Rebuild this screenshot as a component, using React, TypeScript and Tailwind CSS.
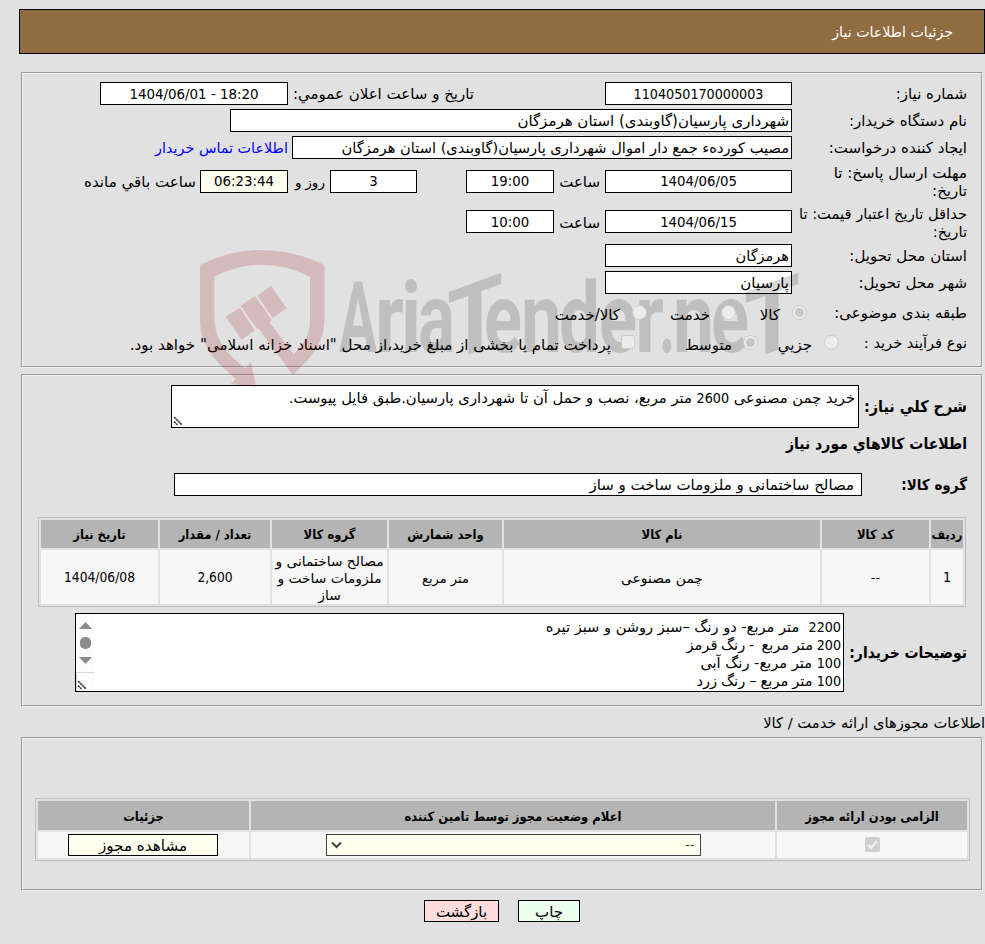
import { ReactNode } from "react";
import clsx from "clsx";

type BoxProps = {
    children?: ReactNode;
    className?: string;
};

type RowProps = {
    label: ReactNode;
    children: ReactNode;
    className?: string;
};

const goodsColumns = [
    { title: "ردیف", width: "w-[32px]" },
    { title: "کد کالا", width: "w-[107px]" },
    { title: "نام کالا", width: "w-[316px]" },
    { title: "واحد شمارش", width: "w-[113px]" },
    { title: "گروه کالا", width: "w-[115px]" },
    { title: "تعداد / مقدار", width: "w-[110px]" },
    { title: "تاریخ نیاز", width: "w-[117px]" },
];

const wordmark = [
    { char: "A", x: 339, width: 38 },
    { char: "r", x: 375, width: 29 },
    { char: "i", x: 401, width: 20 },
    { char: "a", x: 418, width: 37 },
    { char: "e", x: 484, width: 38 },
    { char: "n", x: 521, width: 41 },
    { char: "d", x: 559, width: 41 },
    { char: "e", x: 599, width: 38 },
    { char: "r", x: 635, width: 29 },
    { char: ".", x: 659, width: 16 },
    { char: "n", x: 673, width: 41 },
    { char: "e", x: 711, width: 38 },
];

const Num = ({ children }: { children: ReactNode }) => (
    <span className="font-['DejaVu_Sans_Condensed'] text-[14.2px]">
        {children}
    </span>
);

const Box = ({ children, className }: BoxProps) => (
    <div
        className={clsx(
            "flex h-[23px] shrink-0 items-center border border-black px-[2px] whitespace-nowrap",
            className,
        )}
    >
        {children}
    </div>
);

const NumBox = ({ children, className }: BoxProps) => (
    <Box
        className={clsx(
            "justify-center font-['DejaVu_Sans_Condensed']",
            className,
        )}
    >
        {children}
    </Box>
);

const Row = ({ label, children, className }: RowProps) => (
    <div className={clsx("flex items-center", className)}>
        <div className="w-[175px] shrink-0 whitespace-nowrap">{label}</div>
        {children}
    </div>
);

const Panel = ({ children, className }: BoxProps) => (
    <section
        className={clsx(
            "mr-[2px] ml-[21px] border-2 border-[#f0f0f0] [border-style:groove]",
            className,
        )}
    >
        {children}
    </section>
);

const Radio = ({ checked }: { checked?: boolean }) => (
    <span className="relative z-10 flex size-[15px] shrink-0 items-center justify-center rounded-full border border-[#cbcbcb] bg-[#ececec]">
        {checked && <span className="size-[9px] rounded-full bg-[#c8c8c8]" />}
    </span>
);

const ResizeHandle = () => (
    <svg width="10" height="10" viewBox="0 0 10 10" className="shrink-0">
        <path
            d="M1 1L9 9M1 5.5L4.5 9"
            stroke="#444"
            strokeWidth="1.7"
            strokeDasharray="2.4 0.4"
            fill="none"
        />
    </svg>
);

const Watermark = () => (
    <svg
        className="pointer-events-none absolute top-0 left-0 [direction:ltr]"
        width="985"
        height="400"
        viewBox="0 0 985 400"
    >
        <g
            transform="translate(190 245) scale(0.3333)"
            fill="#a0000a"
            opacity="0.17"
        >
            <path
                fillRule="evenodd"
                d="M30 60Q120 15 215 15Q312 15 403 60V225C403 295 362 340 308 390L205 250L202 253L152 182L195 153L243 222L240 234L312 328C345 290 360 270 360 225V95Q290 59 215 59Q143 59 73 95V215C73 280 105 320 165 370L183 350L198 426L122 417L138 402C75 350 30 300 30 225Z"
            />
            <path d="M107 215L150 188L194 256L155 284ZM203 152L243 122L290 190L248 219Z" />
        </g>
        <g
            opacity="0.147"
            className="font-['Roboto'] text-[98px] font-bold"
        >
            {wordmark.map((letter) => (
                <text
                    key={letter.x}
                    x={letter.x}
                    y="352"
                    textLength={letter.width}
                    lengthAdjust="spacingAndGlyphs"
                >
                    {letter.char}
                </text>
            ))}
            {[475, 772].map((x) => (
                <text
                    key={x}
                    transform={`translate(${x} 352) skewY(-20)`}
                    x="-28"
                    y="0"
                    textLength="56"
                    lengthAdjust="spacingAndGlyphs"
                >
                    T
                </text>
            ))}
        </g>
    </svg>
);

const GeneralInfo = () => (
    <Panel className="mt-[18px] h-[296px] pt-2 pr-[14px]">
        <Row label="شماره نیاز:" className="h-[23px]">
            <NumBox className="w-[187px] bg-white text-[14.2px]">
                1104050170000003
            </NumBox>
            <span className="mr-[131px] w-[186px] whitespace-nowrap">
                تاریخ و ساعت اعلان عمومي:
            </span>
            <NumBox className="w-[188px] bg-white text-[14.9px]">
                <bdi dir="ltr">1404/06/01 - 18:20</bdi>
            </NumBox>
        </Row>
        <Row label="نام دستگاه خریدار:" className="mt-1 h-[23px]">
            <Box className="w-[562px] bg-white">
                شهرداری پارسیان(گاوبندی) استان هرمزگان
            </Box>
        </Row>
        <Row label="ایجاد کننده درخواست:" className="mt-1 h-[23px]">
            <Box className="w-[500px] bg-white text-[14.65px]">
                مصیب کوردهء جمع دار اموال شهرداری پارسیان(گاوبندی) استان هرمزگان
            </Box>
            <a className="mr-1 text-[14.35px] whitespace-nowrap text-[#0000ff]">
                اطلاعات تماس خریدار
            </a>
        </Row>
        <Row
            label={
                <div className="pt-px">
                    مهلت ارسال پاسخ: تا
                    <br />
                    تاریخ:
                </div>
            }
            className="mt-1 h-[36px]"
        >
            <NumBox className="h-[22px] w-[187px] bg-white text-[14.8px]">
                1404/06/05
            </NumBox>
            <span className="w-[51px] pt-px pr-[5px]">ساعت</span>
            <NumBox className="h-[22px] w-[88px] bg-white text-[14.8px]">
                19:00
            </NumBox>
            <NumBox className="mr-[49px] h-[22px] w-[87px] bg-white text-[14.8px]">
                3
            </NumBox>
            <span className="w-[42px] pt-px pr-[5px] text-[13.6px] whitespace-nowrap [word-spacing:-0.5px]">
                روز و
            </span>
            <NumBox className="h-[22px] w-[88px] bg-[#fffff0] text-[14.8px]">
                06:23:44
            </NumBox>
            <span className="pt-px pr-1 text-[15.1px] whitespace-nowrap">
                ساعت باقي مانده
            </span>
        </Row>
        <Row
            label={
                <div className="pt-[2px] text-[14.7px]">
                    حداقل تاریخ اعتبار قیمت: تا
                    <br />
                    تاریخ:
                </div>
            }
            className="mt-[5px] h-[35px]"
        >
            <NumBox className="w-[187px] bg-white text-[14.8px]">
                1404/06/15
            </NumBox>
            <span className="w-[51px] pt-[2px] pr-[5px]">ساعت</span>
            <NumBox className="w-[88px] bg-white text-[14.8px]">10:00</NumBox>
        </Row>
        <Row label="استان محل تحویل:" className="mt-[5px] h-[23px]">
            <Box className="w-[187px] bg-white text-[14.5px]">هرمزگان</Box>
        </Row>
        <Row label="شهر محل تحویل:" className="mt-1 h-[23px]">
            <Box className="w-[187px] bg-white">پارسیان</Box>
        </Row>
        <div className="mt-[6px] flex h-6 items-center whitespace-nowrap">
            <span className="w-[160px] pt-px">طبقه بندی موضوعی:</span>
            <Radio checked />
            <span className="mr-3 w-[44px] pt-[5px]">کالا</span>
            <Radio />
            <span className="mr-[11px] w-[63px] pt-[5px]">خدمت</span>
            <Radio />
            <span className="mr-3 pt-[5px]">کالا/خدمت</span>
        </div>
        <div className="mt-[6px] flex h-6 items-center whitespace-nowrap">
            <span className="w-[128px] pt-px text-[14.6px]">
                نوع فرآیند خرید :
            </span>
            <Radio />
            <span className="mr-3 w-[54px] pt-[5px]">جزیي</span>
            <Radio checked />
            <span className="mr-[11px] w-[97px] pt-[5px]">متوسط</span>
            <span className="relative z-10 size-[14px] rounded-[3px] border border-[#cbcbcb] bg-[#ececec]" />
            <span className="mr-[10px] pt-[5px] text-[15.1px]">
                پرداخت تمام یا بخشی از مبلغ خرید،از محل "اسناد خزانه اسلامی"
                خواهد بود.
            </span>
        </div>
    </Panel>
);

const GoodsTable = () => (
    <table className="mt-[21px] mr-px w-[928px] table-fixed border-separate border-spacing-[2px] border border-[#bfbfbf] text-center text-[13.8px] leading-[17px]">
        <thead>
            <tr className="h-[28px] bg-[#b4b4b4]">
                {goodsColumns.map((column) => (
                    <th
                        key={column.title}
                        className={clsx(
                            "p-0 font-['DejaVu_Sans_Condensed'] text-[12.9px] whitespace-nowrap",
                            column.width,
                        )}
                    >
                        {column.title}
                    </th>
                ))}
            </tr>
        </thead>
        <tbody>
            <tr className="h-[54px] bg-[#f7f7f7]">
                <td className="p-0">
                    <Num>1</Num>
                </td>
                <td className="p-0 text-[13px]">--</td>
                <td className="p-0 pt-[2px]">چمن مصنوعی</td>
                <td className="p-0 pt-[2px] text-[13px]">متر مربع</td>
                <td className="p-0 pt-[2px]">
                    مصالح ساختمانی و ملزومات ساخت و ساز
                </td>
                <td className="p-0 pt-px font-['DejaVu_Sans_Condensed'] text-[13.7px]">
                    2,600
                </td>
                <td className="p-0 pt-px font-['DejaVu_Sans_Condensed'] text-[13.7px]">
                    1404/06/08
                </td>
            </tr>
        </tbody>
    </table>
);

const NeedDetails = () => (
    <Panel className="mt-[6px] h-[333px] pt-[9px] pr-[14px]">
        <div className="flex items-center">
            <b className="w-[108px] text-[16px] whitespace-nowrap">
                شرح کلي نیاز:
            </b>
            <div className="flex h-[43px] w-[688px] justify-between border border-black bg-white pr-[3px]">
                <p className="pt-[3px] text-[14.75px]">
                    خرید چمن مصنوعی <Num>2600</Num> متر مربع، نصب و حمل آن تا
                    شهرداری پارسیان.طبق فایل پیوست.
                </p>
                <div className="ml-px self-end pb-px">
                    <ResizeHandle />
                </div>
            </div>
        </div>
        <b className="mt-[7px] block text-[15.6px]">
            اطلاعات کالاهاي مورد نیاز
        </b>
        <div className="mt-5 flex h-[23px] items-center">
            <b className="w-[105px]">گروه کالا:</b>
            <Box className="w-[688px] bg-white pr-[7px]">
                مصالح ساختمانی و ملزومات ساخت و ساز
            </Box>
        </div>
        <GoodsTable />
        <div className="mt-[6px] flex items-center">
            <b className="w-[123px] pt-px text-[15.5px] whitespace-nowrap">
                توضیحات خریدار:
            </b>
            <div className="flex h-[79px] w-[769px] justify-between border border-black bg-white pr-[2px]">
                <div className="pt-[4px] text-[14.6px] whitespace-pre">
                    <p>
                        <Num>2200</Num>
                        {"  متر مربع- دو رنگ –سبز روشن و سبز تیره"}
                    </p>
                    <p className="[word-spacing:-1px]">
                        <Num>200</Num>
                        {" متر مربع  - رنگ قرمز"}
                    </p>
                    <p>
                        <Num>100</Num>
                        {" متر مربع- رنگ آبی"}
                    </p>
                    <p className="[word-spacing:-0.6px]">
                        <Num>100</Num>
                        {" متر مربع – رنگ زرد"}
                    </p>
                </div>
                <div className="flex w-[19px] flex-col bg-[#fcfcfc]">
                    <svg width="19" height="58" viewBox="0 0 19 58">
                        <path
                            d="M9.5 8L16 15H3ZM9.5 50L16 43H3Z"
                            fill="#8b8b8b"
                        />
                        <rect
                            x="4"
                            y="23"
                            width="11"
                            height="12"
                            rx="5"
                            fill="#8b8b8b"
                        />
                    </svg>
                    <div className="flex grow items-end justify-end border-t border-l border-[#d9d9d9] pb-px">
                        <ResizeHandle />
                    </div>
                </div>
            </div>
        </div>
    </Panel>
);

const Licenses = () => (
    <Panel className="h-[154px] pt-[59px] pr-[11px]">
        <table className="w-[935px] table-fixed border-separate border-spacing-[2px] border border-[#bfbfbf] text-center">
            <thead>
                <tr className="h-[29px] bg-[#b4b4b4] font-['DejaVu_Sans_Condensed'] text-[12.9px]">
                    <th className="w-[190px] p-0 pt-[2px]">
                        الزامی بودن ارائه مجوز
                    </th>
                    <th className="w-[524px] p-0 pt-[2px]">
                        اعلام وضعیت مجوز توسط تامین کننده
                    </th>
                    <th className="w-[211px] p-0 pt-[2px]">جزئیات</th>
                </tr>
            </thead>
            <tbody>
                <tr className="h-[26px] bg-[#f7f7f7]">
                    <td className="p-0 pb-px">
                        <span className="mx-auto flex size-[15px] items-center justify-center rounded-[2px] bg-[#cfcfcf]">
                            <svg width="13" height="13" viewBox="0 0 13 13">
                                <path
                                    d="M2 7L5 10L11 3"
                                    stroke="#f4f4f4"
                                    strokeWidth="2"
                                    fill="none"
                                />
                            </svg>
                        </span>
                    </td>
                    <td className="p-0">
                        <div className="mx-auto flex h-[22px] w-[375px] items-center justify-between border border-[#444] bg-[#fffff0] pr-[5px] pl-1 text-[13px] text-[#444]">
                            <span>--</span>
                            <svg width="11" height="8" viewBox="0 0 11 8">
                                <path
                                    d="M1 1.5L5.5 6L10 1.5"
                                    stroke="#444"
                                    strokeWidth="2"
                                    fill="none"
                                />
                            </svg>
                        </div>
                    </td>
                    <td className="p-0 pr-px">
                        <button className="mx-auto flex h-[22px] w-[150px] items-center justify-center border border-black bg-[#fffff0] pt-[2px] text-[15.2px]">
                            مشاهده مجوز
                        </button>
                    </td>
                </tr>
            </tbody>
        </table>
    </Panel>
);

export default function App() {
    return (
        <div
            dir="rtl"
            className="relative h-[944px] w-[985px] overflow-hidden bg-[#e1e1e1] pt-[9px] font-['DejaVu_Sans',sans-serif] text-[15px] leading-[18px] text-black [&_b]:font-['DejaVu_Sans_Condensed']"
        >
            <header className="ml-[19px] flex h-[45px] items-center border border-black bg-[#8f6d40] pt-px pr-[31px] text-[14.2px] text-white">
                جزئیات اطلاعات نیاز
            </header>
            <GeneralInfo />
            <NeedDetails />
            <h2 className="flex h-[30px] items-center pt-[2px] text-[14.7px]">
                اطلاعات مجوزهای ارائه خدمت / کالا
            </h2>
            <Licenses />
            <div className="mt-[9px] mr-[405px] flex gap-[19px]">
                <button className="h-[22px] w-[62px] border border-black bg-[#edffed] pt-px">
                    چاپ
                </button>
                <button className="h-[22px] w-[75px] border border-black bg-[#ffdddd] pt-px">
                    بازگشت
                </button>
            </div>
            <Watermark />
        </div>
    );
}
